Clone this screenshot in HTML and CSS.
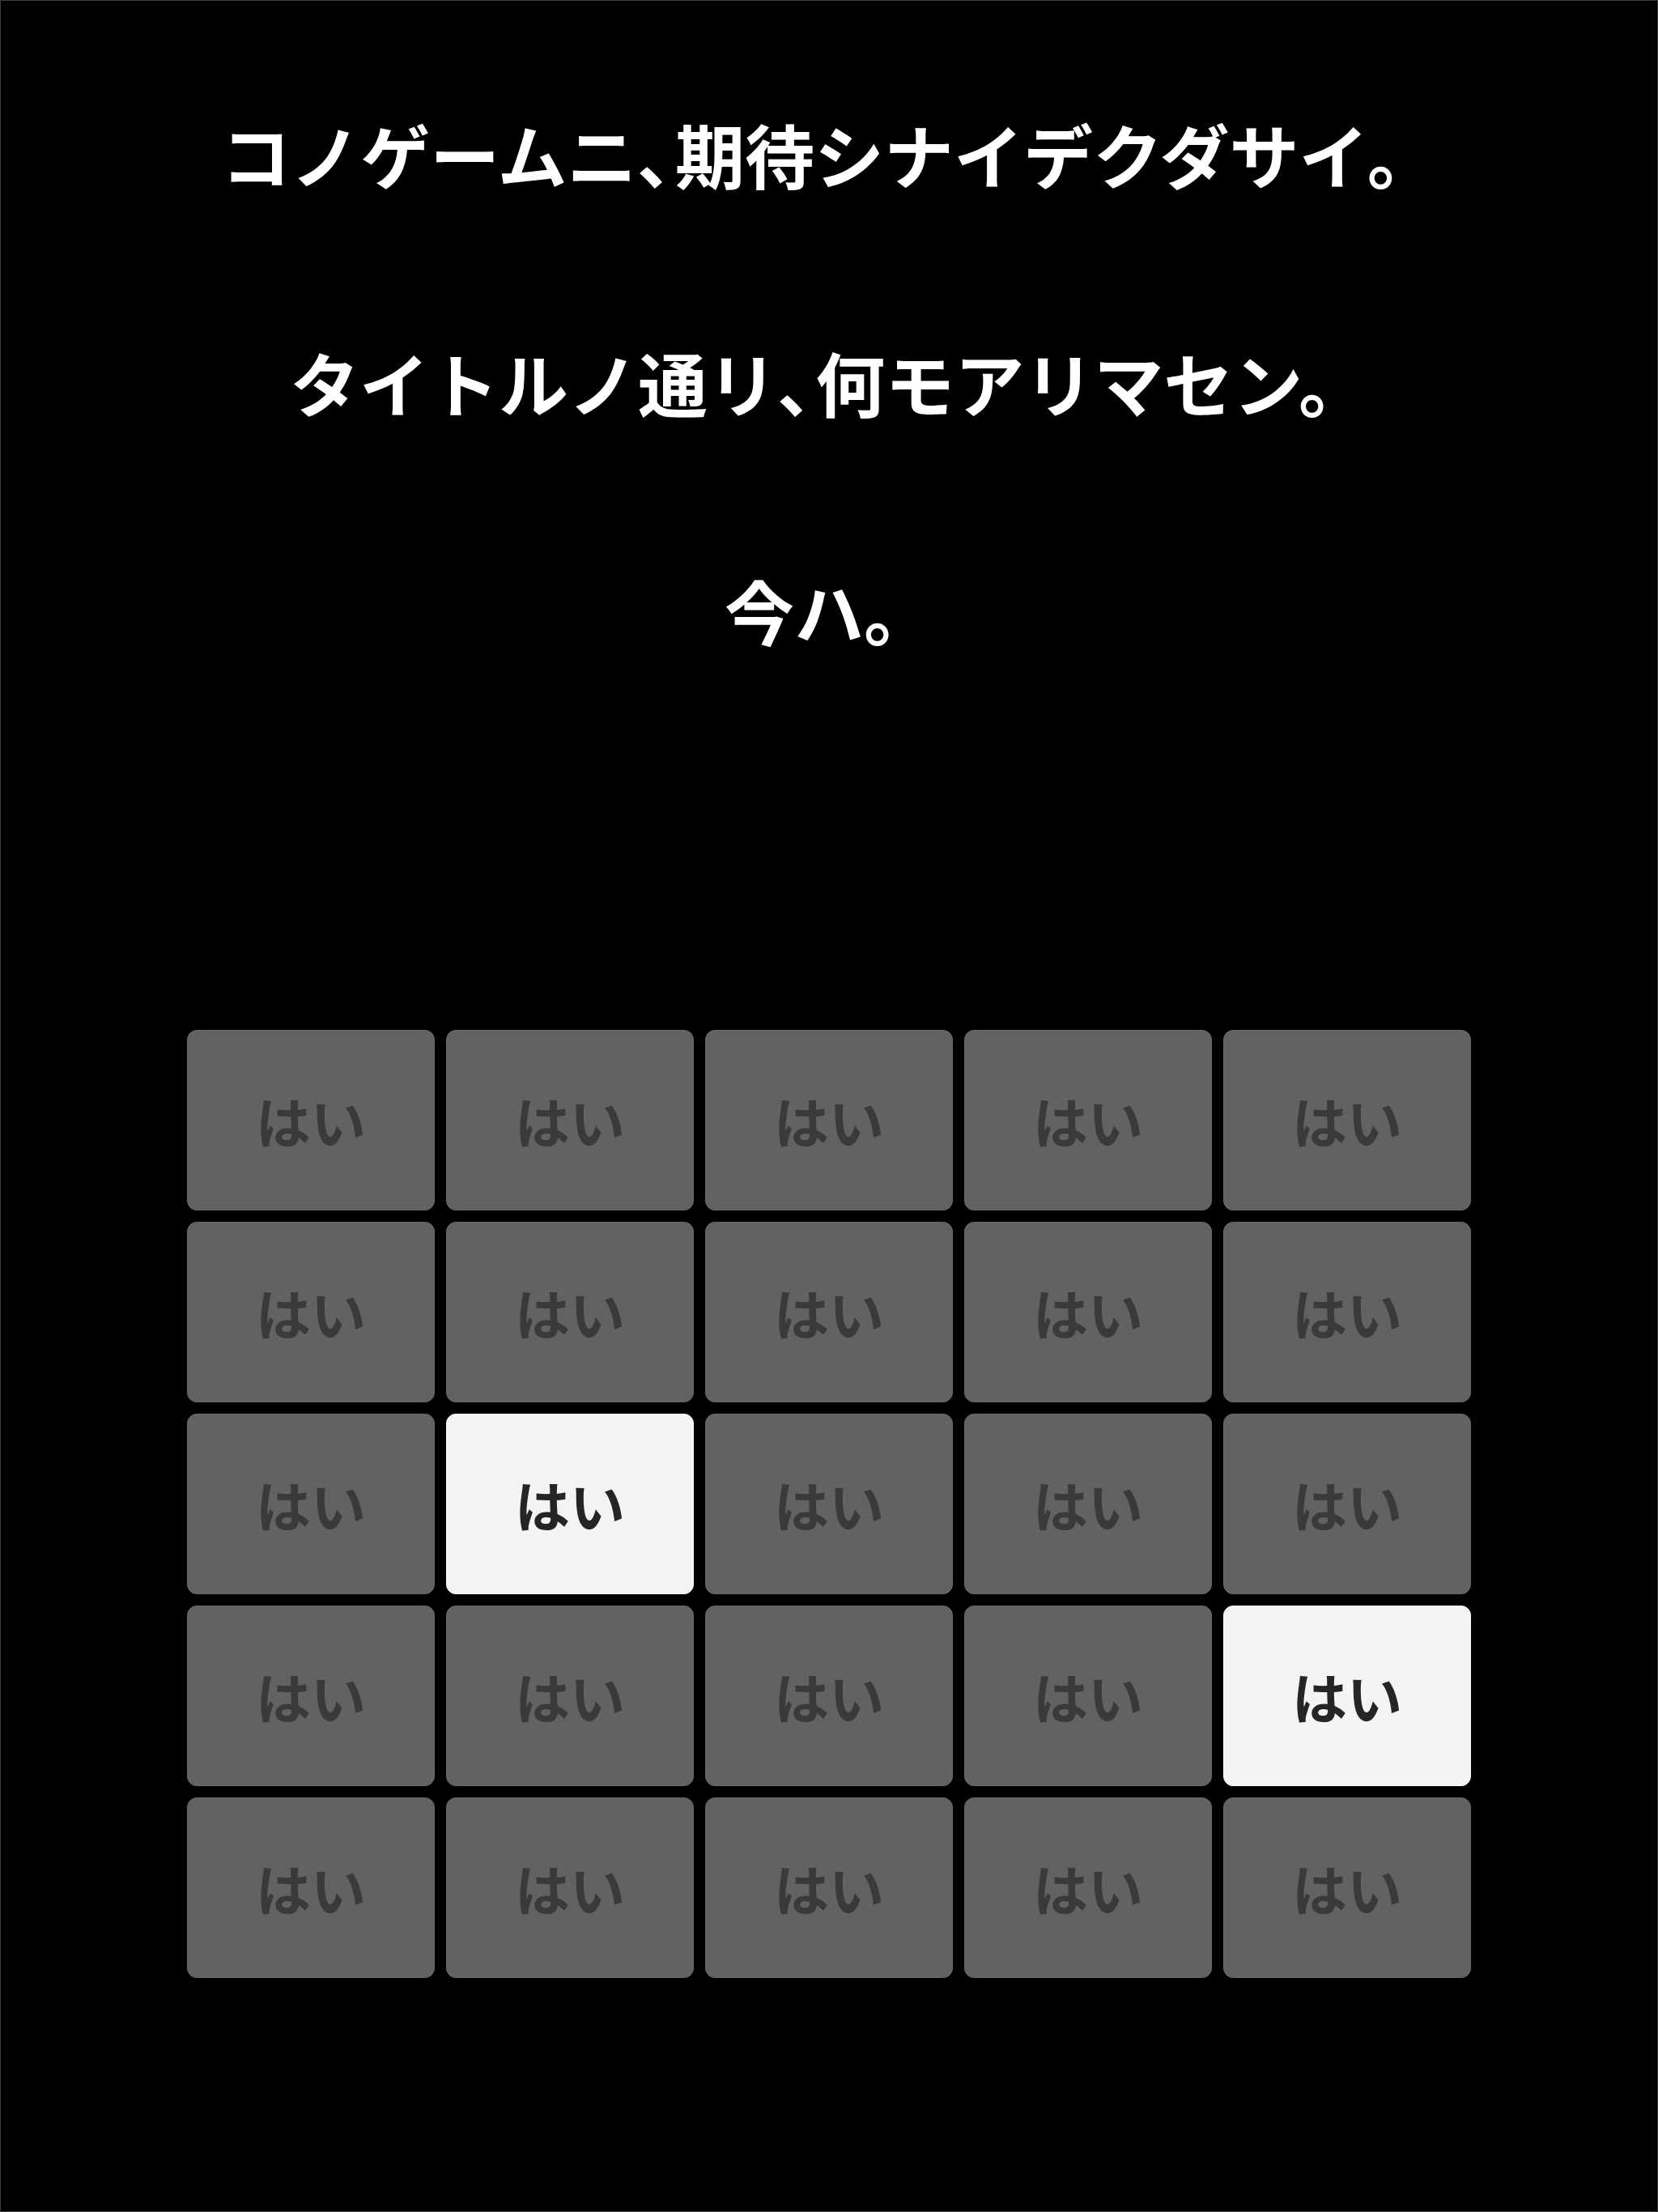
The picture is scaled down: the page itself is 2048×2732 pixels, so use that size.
FILE: index.html
```html
<!DOCTYPE html>
<html lang="ja">
<head>
  <meta charset="UTF-8">
  <meta name="viewport" content="width=device-width, initial-scale=1.0">
  <title>はい</title>
  <link rel="stylesheet" href="styles.css">
</head>
<body>
  <div class="screen">
    <div class="intro">
      <p>コノゲームニ<span class="comma">、</span>期待シナイデクダサイ。</p>
      <p>タイトルノ通リ<span class="comma">、</span>何モアリマセン。</p>
      <p>今ハ。</p>
    </div>

    <div class="board">
      <div class="cell">はい</div>
      <div class="cell">はい</div>
      <div class="cell">はい</div>
      <div class="cell">はい</div>
      <div class="cell">はい</div>

      <div class="cell">はい</div>
      <div class="cell">はい</div>
      <div class="cell">はい</div>
      <div class="cell">はい</div>
      <div class="cell">はい</div>

      <div class="cell">はい</div>
      <div class="cell lit">はい</div>
      <div class="cell">はい</div>
      <div class="cell">はい</div>
      <div class="cell">はい</div>

      <div class="cell">はい</div>
      <div class="cell">はい</div>
      <div class="cell">はい</div>
      <div class="cell">はい</div>
      <div class="cell lit">はい</div>

      <div class="cell">はい</div>
      <div class="cell">はい</div>
      <div class="cell">はい</div>
      <div class="cell">はい</div>
      <div class="cell">はい</div>
    </div>
  </div>
</body>
</html>
```

FILE: styles.css
```css
html, body {
  margin: 0;
  background: #000;
}
body {
  font-family: "Noto Sans CJK JP", "Noto Sans", sans-serif;
}
.screen {
  box-sizing: border-box;
  height: 2732px;
  border: 1px solid #3c3c3c;
  padding-top: 130px;
}
.intro {
  display: flex;
  flex-direction: column;
  align-items: center;
  gap: 164px;
}
.intro p {
  margin: 0;
  color: #fff;
  font-size: 86px;
  font-weight: 700;
  line-height: 118px;
  white-space: nowrap;
}
/* the touten sits tight against the next word */
.intro .comma {
  letter-spacing: -0.45em;
}
.board {
  display: grid;
  grid-template-columns: repeat(5, 306px);
  grid-auto-rows: 223px;
  gap: 14px;
  justify-content: center;
  margin-top: 459px;
}
.cell {
  display: flex;
  justify-content: center;
  align-items: center;
  background: #626262;
  border: 1px solid #686868;
  border-radius: 12px;
  color: #3a3a3a;
  font-size: 68px;
  font-weight: 700;
  cursor: pointer;
}
.cell.lit {
  background: #f4f4f4;
  border-color: #fafafa;
  color: #252525;
}
```
